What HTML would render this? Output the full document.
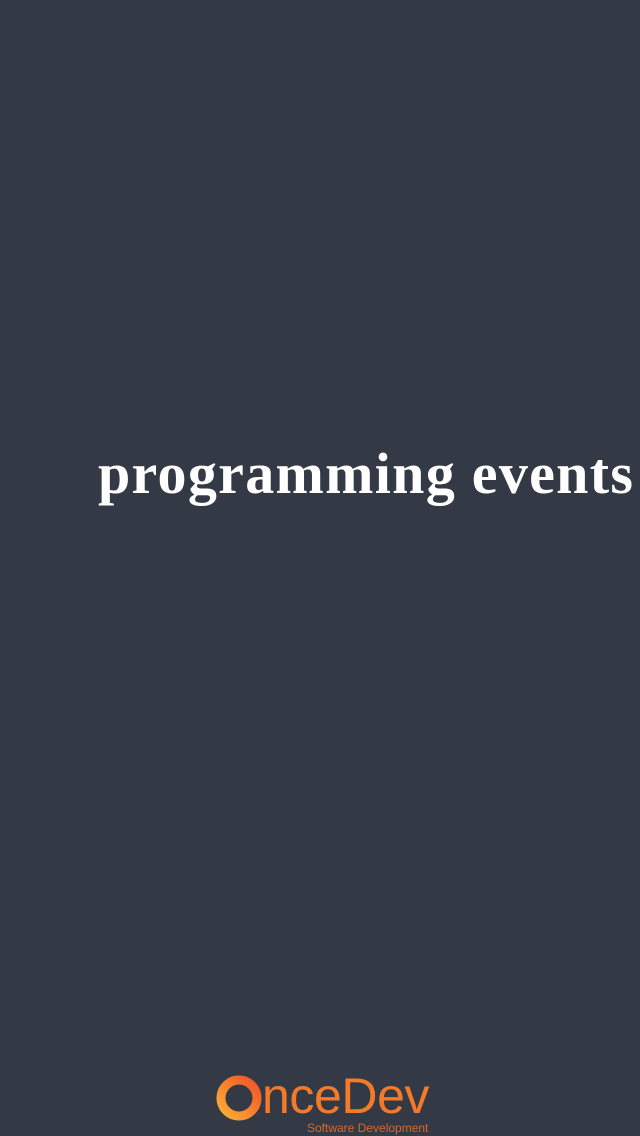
<!DOCTYPE html>
<html><head><style>
html,body{margin:0;padding:0;width:640px;height:1136px;background:#343a45;overflow:hidden;position:relative}
.t{position:absolute;left:98px;top:440px;font-family:"Liberation Serif",serif;font-weight:bold;font-size:58px;color:#fff;white-space:nowrap;letter-spacing:1.3px}
.logo{position:absolute;left:262px;top:1067px;font-family:"Liberation Sans",sans-serif;font-size:50px;color:#f47a2a;letter-spacing:-0.4px;white-space:nowrap}
.sub{position:absolute;left:307px;top:1121px;font-family:"Liberation Sans",sans-serif;font-size:12px;color:#e0642a;white-space:nowrap;letter-spacing:0px}
</style></head><body>
<div class="t">programming events</div>
<svg style="position:absolute;left:216px;top:1074px" width="48" height="48" viewBox="0 0 48 48">
<defs><linearGradient id="g" x1="0" y1="1" x2="1" y2="0"><stop offset="0" stop-color="#fbb034"/><stop offset="1" stop-color="#f0532a"/></linearGradient></defs>
<circle cx="23" cy="24" r="18" fill="none" stroke="url(#g)" stroke-width="9"/>
</svg>
<div class="logo">nceDev</div>
<div class="sub">Software Development</div>
</body></html>
